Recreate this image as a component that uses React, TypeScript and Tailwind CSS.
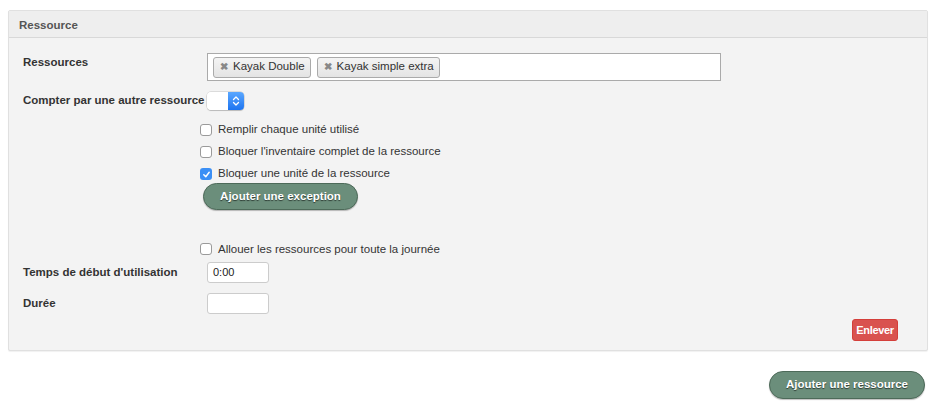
import React from 'react'

const font = { fontFamily: '"Liberation Sans", Arial, sans-serif' }

function Tag(props: { label: string }) {
  return (
    <span className="flex items-center h-[21px] pl-[6px] pr-[5px] mr-[6px] border border-[#aaa] rounded-[3px] bg-gradient-to-b from-[#f4f4f4] to-[#e4e4e4] text-[11.5px] text-[#333]">
      <span className="text-[#888] font-bold text-[10px] mr-[5px] leading-none">✖</span>
      {props.label}
    </span>
  )
}

function Check(props: { checked?: boolean, label: string }) {
  return (
    <div className="flex items-center h-[22px] text-[11.5px] text-[#333]">
      {props.checked ? (
        <span className="w-[12px] h-[12px] rounded-[3px] bg-[#3b8ff5] flex items-center justify-center">
          <svg width="9" height="9" viewBox="0 0 10 10">
            <path d="M2 5.2 L4.2 7.5 L8 2.5" stroke="white" strokeWidth="1.6" fill="none" strokeLinecap="round" strokeLinejoin="round"/>
          </svg>
        </span>
      ) : (
        <span className="w-[12px] h-[12px] rounded-[3px] bg-white border border-[#9a9a9a]"/>
      )}
      <span className="ml-[6px]">{props.label}</span>
    </div>
  )
}

function GreenButton(props: { children: React.ReactNode, className?: string }) {
  return (
    <button
      className={"h-[27px] rounded-full bg-[#6b8e7b] border border-[#4d6a59] text-white font-bold text-[11.5px] [text-shadow:0_1px_1px_rgba(0,0,0,0.6)] shadow-[0_1px_1px_rgba(0,0,0,0.25)] " + (props.className || "")}>
      {props.children}
    </button>
  )
}

export default function App() {
  return (
    <div className="bg-white w-[937px] h-[407px] pt-[10px] pl-[8px]" style={font}>
      <div className="w-[920px] h-[341px] border border-[#e0e0e0] rounded-[2px] bg-[#f3f3f3] shadow-[0_1px_1px_rgba(0,0,0,0.06)] flex flex-col">
        <div className="h-[27px] bg-[#eeeeee] border-b border-[#d8d8d8] flex items-center pl-[10px] pt-[3px] text-[11.5px] font-bold text-[#555]">
          Ressource
        </div>
        <div className="flex flex-col pl-[14px] pr-[29px] flex-1">
          <div className="flex mt-[15px]">
            <div className="w-[184px] font-bold text-[11.5px] text-[#333] pt-[1px]">Ressources</div>
            <div className="w-[514px] h-[28px] bg-white border border-[#aaa] flex items-center pl-[5px]">
              <Tag label="Kayak Double"/>
              <Tag label="Kayak simple extra"/>
            </div>
          </div>
          <div className="flex items-center mt-[10px] h-[19px]">
            <div className="w-[184px] font-bold text-[11.5px] text-[#333] whitespace-nowrap">Compter par une autre ressource</div>
            <div className="w-[37px] h-[18px] rounded-[4px] flex overflow-hidden shadow-[0_0_0_0.5px_rgba(0,0,0,0.2),0_1px_1px_rgba(0,0,0,0.15)]">
              <div className="flex-1 bg-white"/>
              <div className="w-[16px] bg-gradient-to-b from-[#5aa7ff] to-[#1c74f0] flex items-center justify-center">
                <svg width="8" height="12" viewBox="0 0 8 12">
                  <path d="M1.5 4.5 L4 2 L6.5 4.5 M1.5 7.5 L4 10 L6.5 7.5" stroke="white" strokeWidth="1.3" fill="none" strokeLinecap="round" strokeLinejoin="round"/>
                </svg>
              </div>
            </div>
          </div>
          <div className="flex flex-col pl-[177px] mt-[9px]">
            <Check label="Remplir chaque unité utilisé"/>
            <Check label="Bloquer l'inventaire complet de la ressource"/>
            <Check checked label="Bloquer une unité de la ressource"/>
            <div className="mt-[-2px] ml-[3px]">
              <GreenButton className="w-[155px]">Ajouter une exception</GreenButton>
            </div>
          </div>
          <div className="pl-[177px] mt-[28px]">
            <Check label="Allouer les ressources pour toute la journée"/>
          </div>
          <div className="flex items-center mt-[2px]">
            <div className="w-[184px] font-bold text-[11.5px] text-[#333]">Temps de début d'utilisation</div>
            <div className="w-[62px] h-[21px] bg-white border border-[#ccc] rounded-[3px] flex items-center pl-[5px] text-[11px] text-[#222]">0:00</div>
          </div>
          <div className="flex items-center mt-[10px]">
            <div className="w-[184px] font-bold text-[11.5px] text-[#333]">Durée</div>
            <div className="w-[62px] h-[21px] bg-white border border-[#ccc] rounded-[3px]"/>
          </div>
          <div className="flex justify-end mt-[5px]">
            <button className="h-[22px] w-[46px] rounded-[3px] bg-[#d9534f] text-white font-bold text-[11px] border border-[#d43f3a] tracking-[-0.3px]">Enlever</button>
          </div>
        </div>
      </div>
      <div className="flex justify-end w-[917px] mt-[20px]">
        <GreenButton className="w-[156px] h-[28px]">Ajouter une ressource</GreenButton>
      </div>
    </div>
  )
}
